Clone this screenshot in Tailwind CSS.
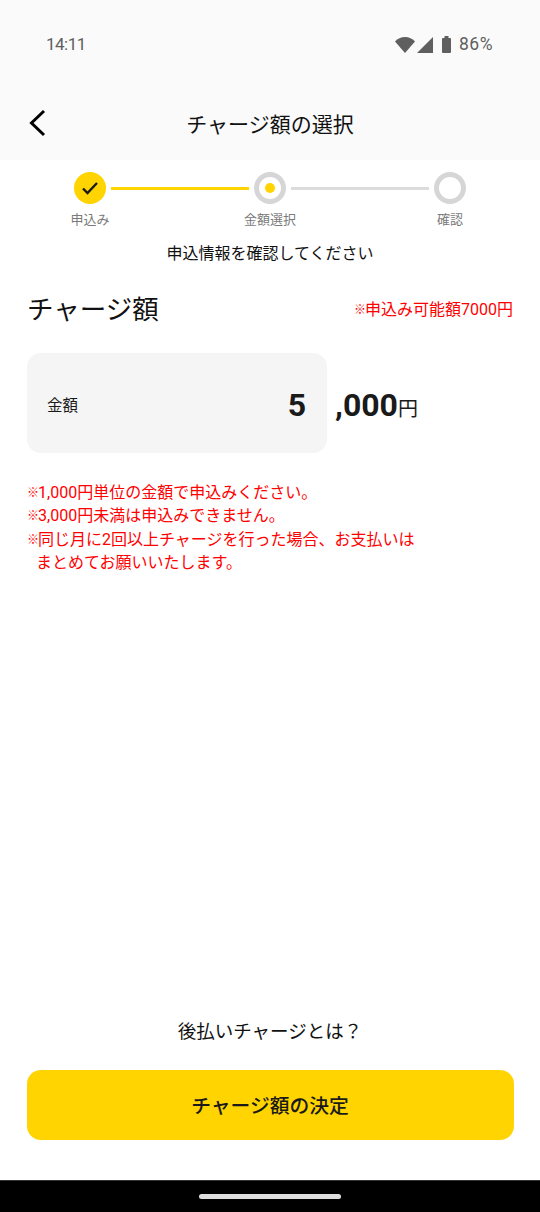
<!DOCTYPE html>
<html lang="ja">
<head>
  <meta charset="utf-8">
  <meta name="viewport" content="width=device-width,initial-scale=1">
  <title>チャージ額の選択</title>
  <script src="https://cdn.jsdelivr.net/npm/@tailwindcss/browser@4"></script>
</head>
<body class="bg-white">
  <div class="flex h-[1212px] w-[540px] flex-col overflow-hidden font-['Roboto','Noto_Sans_CJK_JP',sans-serif] text-[#1a1a1a]">

    <!-- Status bar + header -->
    <div class="h-[160px] shrink-0 bg-[#fafafa]">
      <div class="flex h-[88px] items-center justify-between pl-[46px] pr-[47px] pt-[1px] text-[17px] text-[#5f5f5f]">
        <span class="tracking-[-0.5px]">14:11</span>
        <div class="flex items-center">
          <svg width="20" height="16" viewBox="0 0 20 16" class="mr-[2px]"><path d="M0 4.500C2.600 1.700 6 0 10 0s7.400 1.700 10 4.500L10 16z" fill="#5f5f5f"/></svg>
          <svg width="16" height="16" viewBox="0 0 16 16" class="mr-[9px]"><path d="M16 0v16H0z" fill="#5f5f5f"/></svg>
          <svg width="9" height="17" viewBox="0 0 9 17" class="mr-[8px]"><path d="M2.500 0h4v2H8a1 1 0 0 1 1 1v13a1 1 0 0 1-1 1H1a1 1 0 0 1-1-1V3a1 1 0 0 1 1-1h1.500z" fill="#5f5f5f"/></svg>
          <span class="text-[17.500px] tracking-[0.5px]">86%</span>
        </div>
      </div>
      <div class="relative flex h-[72px] items-center justify-center pt-[4px] text-[21px] text-[#111]">
        <svg width="18" height="28" viewBox="0 0 18 28" class="absolute left-[28px] top-[21px]"><path d="M16 2 3.500 14 16 26" fill="none" stroke="#000" stroke-width="3"/></svg>
        <span>チャージ額の選択</span>
      </div>
    </div>

    <!-- Main -->
    <div class="flex flex-1 flex-col">
      <!-- Stepper -->
      <div class="flex items-center justify-center pt-[12px]">
        <div class="flex size-[32px] items-center justify-center rounded-full bg-[#ffd400]">
          <svg width="20" height="16" viewBox="0 0 20 16"><path d="M3 8.500 7.500 13 17 3" fill="none" stroke="#1a1a1a" stroke-width="2.400"/></svg>
        </div>
        <div class="mx-[5px] h-[3px] w-[138px] bg-[#ffd400]"></div>
        <div class="flex size-[32px] items-center justify-center rounded-full border-[5px] border-[#d6d6d6]">
          <div class="size-[10px] rounded-full bg-[#ffd400]"></div>
        </div>
        <div class="mx-[5px] h-[3px] w-[138px] bg-[#dcdcdc]"></div>
        <div class="size-[32px] rounded-full border-[5px] border-[#d6d6d6]"></div>
      </div>
      <div class="mt-[7px] grid grid-cols-3 text-center text-[13px] leading-[18px] text-[#7a7a7a]">
        <span>申込み</span>
        <span>金額選択</span>
        <span>確認</span>
      </div>
      <p class="mt-[14px] text-center text-[16px] leading-[22px] text-[#111]">申込情報を確認してください</p>

      <!-- Amount -->
      <div class="mt-[26px] flex items-center justify-between pl-[27px] pr-[27px]">
        <h2 class="text-[26.500px] leading-[38px] font-normal text-[#111]">チャージ額</h2>
        <span class="text-[16px] text-[#ff0000]"><span class="align-[1px] text-[12px] leading-none font-medium tracking-[-1px]">※</span>申込み可能額7000円</span>
      </div>
      <div class="mt-[24px] flex items-center pl-[26.500px]">
        <div class="flex h-[100px] w-[300px] items-center justify-between rounded-[14px] bg-[#f5f5f5] pl-[20.500px] pr-[20.500px] pt-[3px]">
          <span class="pt-[4px] text-[15.500px]">金額</span>
          <span class="pt-[1px] text-[32px] font-bold">5</span>
        </div>
        <div class="ml-[8.500px] flex items-baseline pt-[4px]">
          <span class="text-[32px] font-bold">,000</span>
          <span class="text-[20px]">円</span>
        </div>
      </div>
      <ul class="mt-[28px] pl-[27px] text-[16px] leading-[23.300px] text-[#ff0000]">
        <li><span class="align-[1px] text-[12px] leading-none font-medium tracking-[-1px]">※</span>1,000円単位の金額で申込みください。</li>
        <li><span class="align-[1px] text-[12px] leading-none font-medium tracking-[-1px]">※</span>3,000円未満は申込みできません。</li>
        <li><span class="align-[1px] text-[12px] leading-none font-medium tracking-[-1px]">※</span>同じ月に2回以上チャージを行った場合、お支払いは</li>
        <li class="pl-[9px]">まとめてお願いいたします。</li>
      </ul>

      <!-- Bottom actions -->
      <div class="mt-auto flex flex-col items-center px-[26.500px] pb-[40px]">
        <a class="text-[18.500px] leading-[26px] text-[#111]">後払いチャージとは？</a>
        <button class="mt-[25px] h-[70px] w-full rounded-[14px] bg-[#ffd400] pt-[4px] text-[19.800px] font-medium">チャージ額の決定</button>
      </div>
    </div>

    <!-- Navigation bar -->
    <div class="flex h-[32px] shrink-0 items-center justify-center border-t border-[#333] bg-black">
      <div class="h-[5px] w-[142px] rounded-full bg-[#dedede]"></div>
    </div>
  </div>
</body>
</html>
